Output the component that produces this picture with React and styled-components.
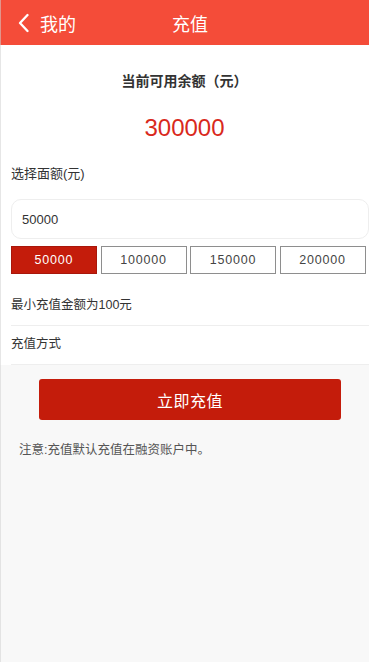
import React, { useState } from "react";
import styled, { createGlobalStyle } from "styled-components";

const Global = createGlobalStyle`
  html, body { margin: 0; padding: 0; }
  body {
    font-family: "Liberation Sans", Arial, "Noto Sans CJK SC", sans-serif;
    background: #f8f8f8;
  }
  * { box-sizing: border-box; }
`;

const Page = styled.div`
  position: relative;
  min-height: 100vh;
  background: #f8f8f8;
  &::before {
    content: "";
    position: absolute;
    left: 0; top: 0; bottom: 0;
    width: 1px;
    background: rgba(210, 210, 210, 0.55);
    z-index: 5;
  }
`;

const Header = styled.header`
  height: 45px;
  background: #f44c39;
  display: grid;
  grid-template-columns: 1fr auto 1fr;
  align-items: center;
  color: #fff;
  font-size: 18px;
`;

const Back = styled.div`
  display: flex;
  align-items: center;
  gap: 11px;
  padding-left: 18px;
`;

const Title = styled.div`
  font-size: 18px;
  padding-top: 1px;
  padding-left: 11px;
`;

const Panel = styled.section`
  background: #fff;
  padding: 0 0 0 11px;
`;

const Balance = styled.div`
  display: flex;
  flex-direction: column;
  align-items: center;
  padding-top: 27px;
  padding-right: 11px;
`;

const BalanceLabel = styled.div`
  font-size: 14px;
  font-weight: bold;
  color: #333;
  line-height: 18px;
`;

const BalanceValue = styled.div`
  margin-top: 24px;
  font-size: 24px;
  color: #d9291c;
  line-height: 28px;
`;

const Label = styled.div`
  margin-top: 24px;
  font-size: 13px;
  color: #333;
  line-height: 16px;
`;

const Input = styled.input`
  display: block;
  width: 358px;
  height: 40px;
  margin-top: 17px;
  border: 1px solid #eeeeee;
  border-radius: 10px;
  padding: 0 10px;
  font-family: inherit;
  font-size: 13px;
  color: #333;
  outline: none;
`;

const Options = styled.div`
  display: grid;
  grid-template-columns: repeat(4, 86px);
  column-gap: 3.5px;
  margin-top: 7px;
`;

const Option = styled.button`
  height: 28px;
  border: 1px solid ${(p) => (p.$active ? "#a8170b" : "#8e8e8e")};
  background: ${(p) => (p.$active ? "#c41c0b" : "#fff")};
  color: ${(p) => (p.$active ? "#fff" : "#444")};
  font-family: inherit;
  font-size: 12.5px;
  letter-spacing: 0.8px;
  padding: 0;
  cursor: pointer;
`;

const Row = styled.div`
  display: flex;
  align-items: center;
  height: ${(p) => p.$h}px;
  font-size: 12.5px;
  color: #333;
  border-bottom: ${(p) => (p.$line ? "1px solid #eeeeee" : "none")};
  padding-top: ${(p) => p.$pt || 0}px;
  padding-bottom: ${(p) => p.$pb || 0}px;
`;

const Submit = styled.button`
  display: block;
  margin: 14px 0 0 39px;
  width: 302px;
  height: 41px;
  border: none;
  border-radius: 3px;
  background: #c41c0b;
  color: #fff;
  font-family: inherit;
  font-size: 16px;
  letter-spacing: 0.5px;
  cursor: pointer;
`;

const Note = styled.p`
  margin: 19px 0 0 19px;
  font-size: 12.5px;
  color: #555;
`;

export default function App() {
  const amounts = ["50000", "100000", "150000", "200000"];
  const [value, setValue] = useState("50000");
  return (
    <Page>
      <Global />
      <Header>
        <Back>
          <svg width="11" height="20" viewBox="0 0 11 20">
            <path d="M9.5 2 L2 10 L9.5 18" fill="none" stroke="#fff" strokeWidth="2.3" strokeLinecap="round" strokeLinejoin="round" />
          </svg>
          <span>我的</span>
        </Back>
        <Title>充值</Title>
        <div />
      </Header>
      <Panel>
        <Balance>
          <BalanceLabel>当前可用余额（元）</BalanceLabel>
          <BalanceValue>300000</BalanceValue>
        </Balance>
        <Label>选择面额(元)</Label>
        <Input value={value} onChange={(e) => setValue(e.target.value)} />
        <Options>
          {amounts.map((a) => (
            <Option key={a} $active={a === value} onClick={() => setValue(a)}>
              {a}
            </Option>
          ))}
        </Options>
        <Row $h={52} $line $pt={8}>最小充值金额为100元</Row>
        <Row $h={39} $line $pb={6}>充值方式</Row>
      </Panel>
      <Submit>立即充值</Submit>
      <Note>注意:充值默认充值在融资账户中。</Note>
    </Page>
  );
}
